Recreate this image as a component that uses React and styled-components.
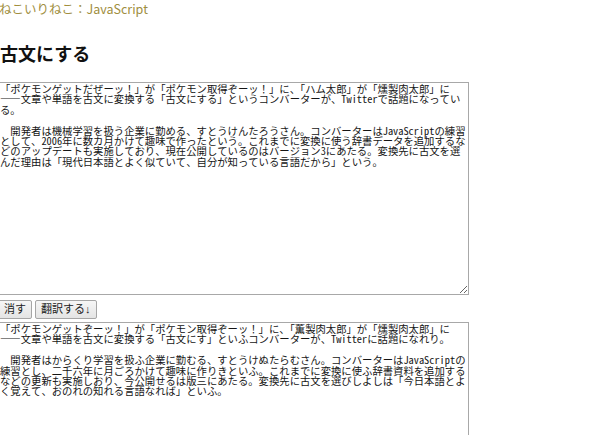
import React from "react";
import styled, { createGlobalStyle } from "styled-components";

const Global = createGlobalStyle`
  html, body {
    margin: 0;
    padding: 0;
    background: #ffffff;
    overflow: hidden;
  }
  body {
    font-family: "Noto Sans CJK JP", "Noto Sans", sans-serif;
    color: #111;
  }
`;

const Page = styled.div`
  margin-left: -2px;
  display: flex;
  flex-direction: column;
  align-items: flex-start;
`;

const TopLink = styled.a`
  display: block;
  margin-left: 1px;
  font-family: "Noto Sans CJK JP", sans-serif;
  font-size: 12.5px;
  line-height: 17px;
  color: #a08e3e;
  text-decoration: none;
`;

const Title = styled.h1`
  margin: 24px 0 17px 2px;
  font-size: 18px;
  line-height: 24px;
  font-weight: bold;
  color: #111;
`;

const TextBox = styled.textarea`
  box-sizing: border-box;
  width: 471px;
  height: 213px;
  margin: 0;
  padding: 1px;
  border: 1px solid #a8a8a8;
  border-radius: 0;
  background: #fff;
  color: #151515;
  font-family: "Noto Sans Mono CJK JP", "Noto Sans CJK JP", monospace;
  font-size: 10.35px;
  line-height: 10.4px;
  white-space: pre-wrap;
  outline: none;
  display: block;
`;

const ButtonRow = styled.div`
  display: flex;
  gap: 3px;
  margin: 5px 0 3px;
`;

const Button = styled.button`
  box-sizing: border-box;
  height: 19px;
  margin: 0;
  padding: 0 5px;
  border: 1px solid #a6a6a6;
  border-radius: 2px;
  background: linear-gradient(#f6f6f6, #e4e4e4);
  color: #222;
  font-family: "Liberation Sans", "Noto Sans CJK JP", sans-serif;
  font-size: 11px;
  line-height: 17px;
`;

const SOURCE =
  "「ポケモンゲットだぜーッ！」が「ポケモン取得ぞーッ！」に、「ハム太郎」が「燻製肉太郎」に\n" +
  "――文章や単語を古文に変換する「古文にする」というコンバーターが、Twitterで話題になっている。\n" +
  "\n" +
  "　開発者は機械学習を扱う企業に勤める、すとうけんたろうさん。コンバーターはJavaScriptの練習として、2006年に数カ月かけて趣味で作ったという。これまでに変換に使う辞書データを追加するなどのアップデートも実施しており、現在公開しているのはバージョン3にあたる。変換先に古文を選んだ理由は「現代日本語とよく似ていて、自分が知っている言語だから」という。";

const RESULT =
  "「ポケモンゲットぞーッ！」が「ポケモン取得ぞーッ！」に、「薫製肉太郎」が「燻製肉太郎」に\n" +
  "――文章や単語を古文に変換する「古文にす」といふコンバーターが、Twitterに話題になれり。\n" +
  "\n" +
  "　開発者はからくり学習を扱ふ企業に勤むる、すとうけぬたらむさん。コンバーターはJavaScriptの練習とし、二千六年に月ごろかけて趣味に作りきといふ。これまでに変換に使ふ辞書資料を追加するなどの更新も実施しおり、今公開せるは版三にあたる。変換先に古文を選びしよしは「今日本語とよく覚えて、おのれの知れる言語なれば」といふ。";

export default function App() {
  return (
    <>
      <Global />
      <Page>
        <TopLink href="#">ねこいりねこ：JavaScript</TopLink>
        <Title>古文にする</Title>
        <TextBox defaultValue={SOURCE} spellCheck={false} />
        <ButtonRow>
          <Button type="button">消す</Button>
          <Button type="button">翻訳する↓</Button>
        </ButtonRow>
        <TextBox defaultValue={RESULT} spellCheck={false} />
      </Page>
    </>
  );
}
